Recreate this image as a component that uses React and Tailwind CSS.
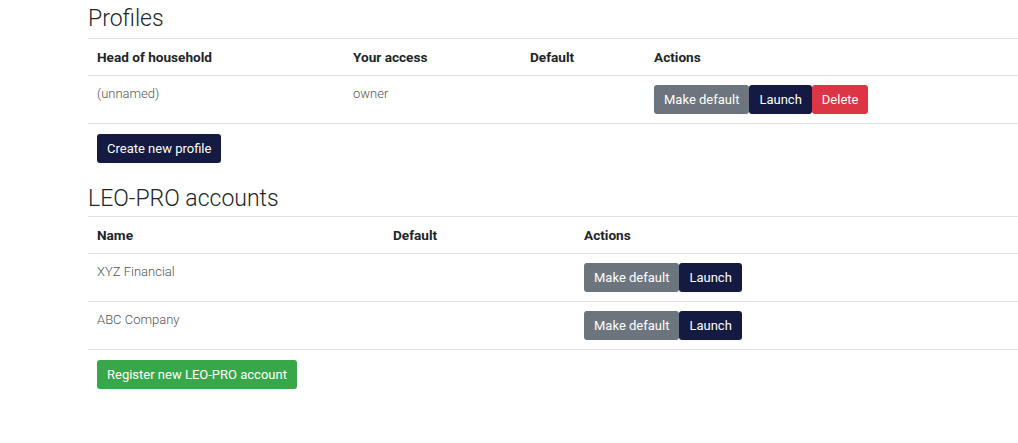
import React from 'react';

const font = { fontFamily: 'Roboto, "Noto Sans", sans-serif' };

const Btn = ({ color, children }) => (
    <button className={`${color} text-white text-[13px] leading-none h-[29px] px-[10px] rounded-[3px]`}>
        {children}
    </button>
);

const profiles = [{ name: '(unnamed)', access: 'owner' }];
const accounts = ['XYZ Financial', 'ABC Company'];

const App = () => {
    return (
        <div className="w-[1018px] h-[443px] bg-white pl-[88px] overflow-hidden text-[#212529]" style={font}>
            <div className="w-[930px]">

                <h3 className="text-[23px] font-light leading-[29px] pt-[4px] pb-[5px]">Profiles</h3>

                <table className="w-full border-collapse text-[13px] text-left">
                    <thead>
                        <tr className="border-t border-b border-[#dee2e6] text-[13.6px]">
                            <th className="w-[256px] pl-[9px] py-2 leading-5 font-bold">Head of household</th>
                            <th className="w-[177px] pl-[9px] py-2 leading-5 font-bold">Your access</th>
                            <th className="w-[124px] pl-[9px] py-2 leading-5 font-bold">Default</th>
                            <th className="pl-[9px] py-2 leading-5 font-bold">Actions</th>
                        </tr>
                    </thead>
                    <tbody>
                        {profiles.map((p) => (
                            <tr key={p.name} className="border-b border-[#dee2e6] align-top">
                                <td className="pl-[9px] pt-[8px] pb-[9px] leading-5 text-[#555] font-light">{p.name}</td>
                                <td className="pl-[9px] pt-[8px] pb-[9px] leading-5 text-[#555] font-light">{p.access}</td>
                                <td className="pl-[9px] py-[9px]"></td>
                                <td className="pl-[9px] py-[9px]">
                                    <div className="flex">
                                        <Btn color="bg-[#6c757d]">Make default</Btn>
                                        <Btn color="bg-[#141a42]">Launch</Btn>
                                        <Btn color="bg-[#dc3545]">Delete</Btn>
                                    </div>
                                </td>
                            </tr>
                        ))}
                    </tbody>
                </table>

                <div className="pl-[9px] pt-[10px]">
                    <Btn color="bg-[#141a42]">Create new profile</Btn>
                </div>

                <h3 className="text-[23px] font-light leading-[29px] pt-[21px] pb-[3px]">LEO-PRO accounts</h3>

                <table className="w-full border-collapse text-[13px] text-left">
                    <thead>
                        <tr className="border-t border-b border-[#dee2e6] text-[13.6px]">
                            <th className="w-[296px] pl-[9px] py-2 leading-5 font-bold">Name</th>
                            <th className="w-[191px] pl-[9px] py-2 leading-5 font-bold">Default</th>
                            <th className="pl-[9px] py-2 leading-5 font-bold">Actions</th>
                        </tr>
                    </thead>
                    <tbody>
                        {accounts.map((a) => (
                            <tr key={a} className="border-b border-[#dee2e6] align-top">
                                <td className="pl-[9px] pt-[8px] pb-[9px] leading-5 text-[#555] font-light">{a}</td>
                                <td className="pl-[9px] py-[9px]"></td>
                                <td className="pl-[9px] py-[9px]">
                                    <div className="flex">
                                        <Btn color="bg-[#6c757d]">Make default</Btn>
                                        <Btn color="bg-[#141a42]">Launch</Btn>
                                    </div>
                                </td>
                            </tr>
                        ))}
                    </tbody>
                </table>

                <div className="pl-[9px] pt-[10px]">
                    <Btn color="bg-[#38a749]">Register new LEO-PRO account</Btn>
                </div>

            </div>
        </div>
    );
};

export default App;
